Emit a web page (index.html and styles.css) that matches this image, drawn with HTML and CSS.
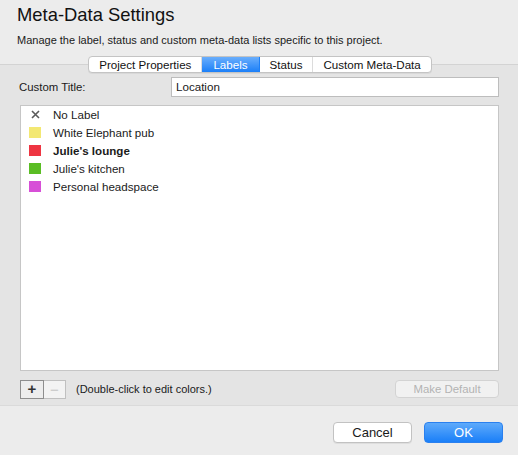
FILE: index.html
```html
<!DOCTYPE html>
<html>
<head>
<meta charset="utf-8">
<link rel="stylesheet" href="styles.css">
</head>
<body>
<div class="window">
  <header class="header">
    <h1 class="title">Meta-Data Settings</h1>
    <p class="subtitle">Manage the label, status and custom meta-data lists specific to this project.</p>
  </header>
  <section class="panel">
    <nav class="tabs">
      <span class="tab">Project Properties</span>
      <span class="tab active">Labels</span>
      <span class="tab">Status</span>
      <span class="tab last">Custom Meta-Data</span>
    </nav>
    <div class="field-row">
      <label class="field-label">Custom Title:</label>
      <div class="field-input">Location</div>
    </div>
    <ul class="list">
      <li class="row"><span class="swatch none"><svg width="9" height="9" viewBox="0 0 9 9"><path d="M1 1L8 8M8 1L1 8" stroke="#5a5a5a" stroke-width="1.6" fill="none"/></svg></span><span class="row-text">No Label</span></li>
      <li class="row"><span class="swatch yellow"></span><span class="row-text">White Elephant pub</span></li>
      <li class="row"><span class="swatch red"></span><span class="row-text bold">Julie's lounge</span></li>
      <li class="row"><span class="swatch green"></span><span class="row-text">Julie's kitchen</span></li>
      <li class="row"><span class="swatch magenta"></span><span class="row-text">Personal headspace</span></li>
    </ul>
    <div class="toolbar">
      <div class="plusminus">
        <span class="pm plus">+</span>
        <span class="pm minus">−</span>
      </div>
      <span class="hint">(Double-click to edit colors.)</span>
      <span class="btn-disabled">Make Default</span>
    </div>
  </section>
  <footer class="footer">
    <span class="btn cancel">Cancel</span>
    <span class="btn ok">OK</span>
  </footer>
</div>
</body>
</html>
```

FILE: styles.css
```css
html, body {
  margin: 0;
  padding: 0;
}
body {
  width: 518px;
  height: 455px;
  overflow: hidden;
  font-family: "Liberation Sans", Arial, sans-serif;
  color: #1a1a1a;
  background: #ececec;
}
.window {
  display: flex;
  flex-direction: column;
  height: 455px;
}
.header {
  background: #ececec;
  height: 65px;
  box-sizing: border-box;
  padding: 3px 0 0 17px;
  border-bottom: 1px solid #d3d3d3;
}
.title {
  margin: 0;
  font-size: 18.4px;
  font-weight: normal;
  line-height: 24px;
  color: #111;
}
.subtitle {
  margin: 6px 0 0 0;
  font-size: 11px;
  line-height: 14px;
  color: #1a1a1a;
}
.panel {
  background: #e4e4e4;
  height: 340px;
  box-sizing: border-box;
  display: flex;
  flex-direction: column;
  padding: 0 19px 0 20px;
}
.tabs {
  align-self: center;
  display: flex;
  margin-top: -9px;
  margin-left: 1px;
  height: 17px;
  background: #fff;
  border: 1px solid #c4c4c4;
  border-radius: 4px;
  box-sizing: border-box;
  overflow: hidden;
  box-shadow: 0 1px 0 rgba(0,0,0,0.05);
}
.tab {
  font-size: 11.6px;
  line-height: 15px;
  padding: 0 10px;
  border-right: 1px solid #dcdcdc;
  color: #111;
}
.tab.last { border-right: none; }
.tab.active {
  background: linear-gradient(#6aaefc, #1b7ff8);
  color: #fff;
  border-right-color: #1b7ff8;
  padding: 0 11px;
}
.field-row {
  display: flex;
  align-items: center;
  margin-top: 4px;
  height: 20px;
}
.field-label {
  font-size: 11.4px;
  width: 152px;
  margin-left: -1px;
  color: #1a1a1a;
}
.field-input {
  flex: 1;
  height: 20px;
  box-sizing: border-box;
  background: #fff;
  border: 1px solid #bdbdbd;
  font-size: 11.6px;
  line-height: 18px;
  padding-left: 4px;
}
.list {
  list-style: none;
  margin: 8px 0 0 0;
  padding: 0;
  height: 266px;
  box-sizing: border-box;
  background: #fff;
  border: 1px solid #c6c6c6;
}
.row {
  display: flex;
  align-items: center;
  height: 18px;
}
.row:first-child { margin-top: -1px; }
.swatch {
  width: 12px;
  height: 11px;
  margin-left: 8px;
  margin-right: 12px;
  display: flex;
  align-items: center;
  justify-content: center;
}
.swatch.yellow { background: #f3e873; }
.swatch.red { background: #ee3542; }
.swatch.green { background: #5abd24; }
.swatch.magenta { background: #d74fd7; }
.row-text {
  font-size: 11.6px;
  color: #1a1a1a;
}
.row-text.bold { font-weight: bold; }
.toolbar {
  display: flex;
  align-items: center;
  margin-top: 8px;
  height: 20px;
}
.plusminus {
  display: flex;
  height: 19px;
  box-sizing: border-box;
  border: 1px solid #c0c0c0;
  background: #f3f3f3;
}
.pm {
  width: 22px;
  text-align: center;
  font-size: 15px;
  line-height: 17px;
  font-weight: bold;
}
.pm.plus {
  color: #333;
  border: 1px solid #8e8e8e;
  margin: -1px 0 -1px -1px;
  background: #ededed;
  line-height: 15px;
}
.pm.minus {
  color: #c6c6c6;
  width: 21px;
  font-weight: normal;
}
.hint {
  font-size: 11px;
  margin-left: 10px;
  color: #1a1a1a;
}
.btn-disabled {
  margin-left: auto;
  width: 104px;
  height: 18px;
  box-sizing: border-box;
  border: 1px solid #d3d3d3;
  border-radius: 4px;
  background: #f1f1f1;
  color: #b3b3b3;
  font-size: 11.4px;
  line-height: 16px;
  text-align: center;
}
.footer {
  flex: 1;
  background: #ececec;
  border-top: 1px solid #dadada;
  display: flex;
  justify-content: flex-end;
  align-items: flex-start;
  padding: 16px 15px 0 0;
}
.btn {
  height: 21px;
  box-sizing: border-box;
  border-radius: 4px;
  font-size: 13px;
  line-height: 19px;
  text-align: center;
}
.cancel {
  width: 79px;
  background: #fff;
  border: 1px solid #c2c2c2;
  color: #1a1a1a;
  box-shadow: 0 1px 0 rgba(0,0,0,0.06);
}
.ok {
  width: 79px;
  margin-left: 12px;
  background: linear-gradient(#5eaafb, #1a7ff8);
  border: 1px solid #2a80ef;
  color: #fff;
}
```
